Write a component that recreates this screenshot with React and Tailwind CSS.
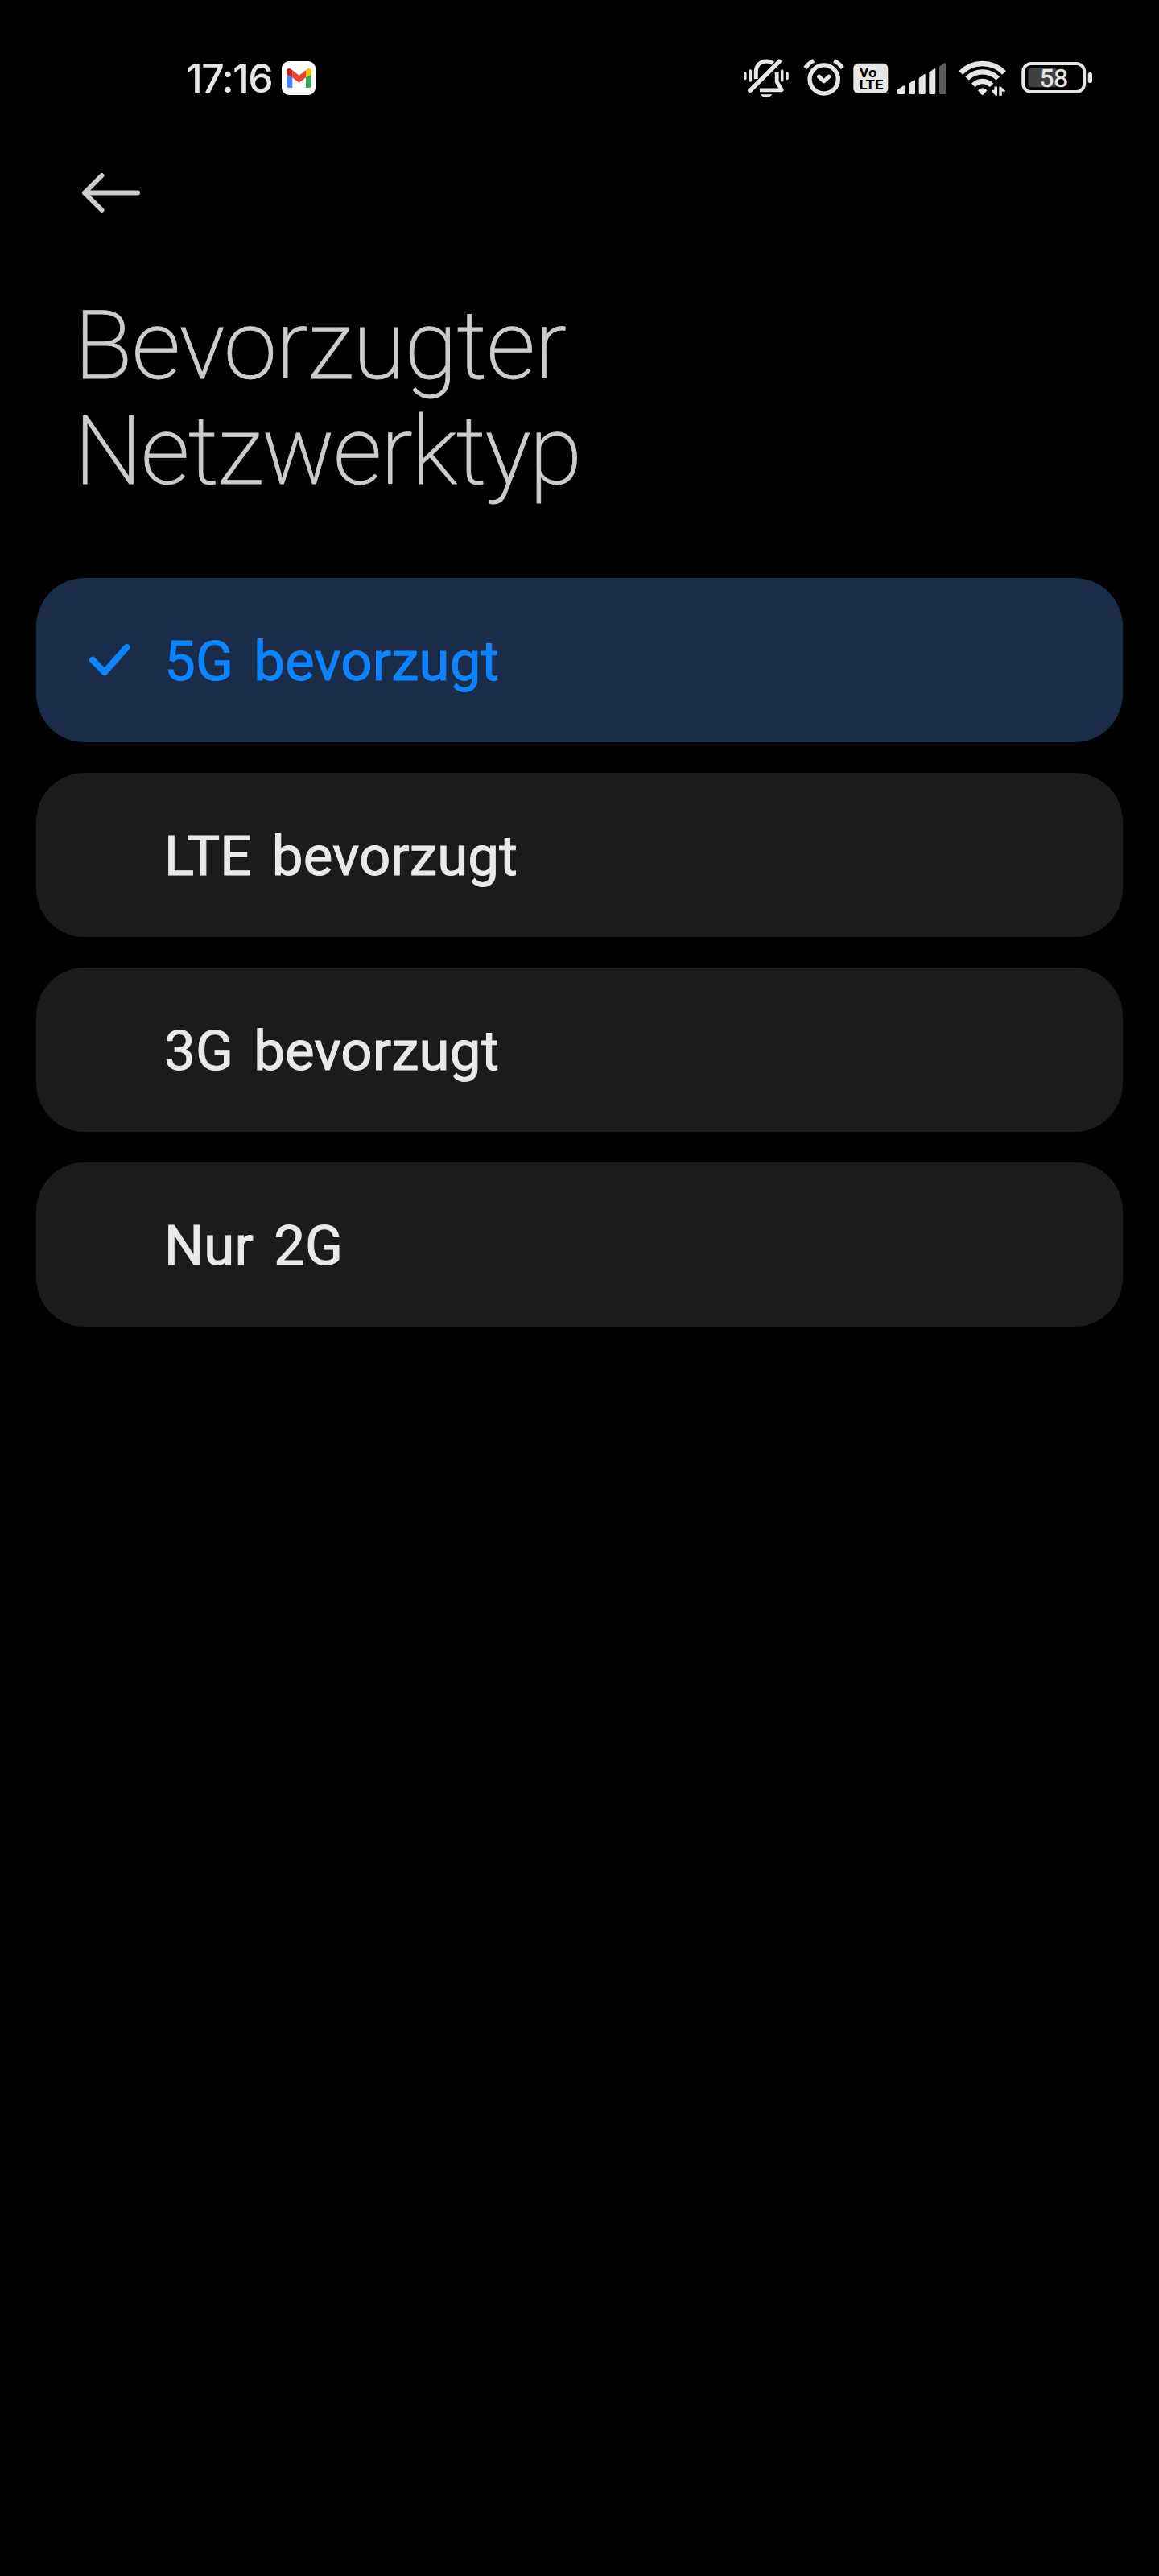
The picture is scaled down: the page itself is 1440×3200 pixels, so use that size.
const options = [
  { id: '5g', label: '5G bevorzugt' },
  { id: 'lte', label: 'LTE bevorzugt' },
  { id: '3g', label: '3G bevorzugt' },
  { id: '2g', label: 'Nur 2G' },
]

const GmailIcon = () => (
  <svg viewBox="0 0 42 42" className="h-[42px] w-[42px]">
    <rect width="42" height="42" rx="9" fill="#fff" />
    <path d="M6 16.5 13.3 20v13H8a2 2 0 0 1-2-2z" fill="#4285f4" />
    <path d="M36.7 16.5 30 20v13h4.7a2 2 0 0 0 2-2z" fill="#34a853" />
    <path d="M13.3 11.3 21.6 17.7 30 11.3V20.3L21.6 26.7 13.3 20.3z" fill="#ea4335" />
    <path d="M6 12.2c0-3 3.3-4.4 5.6-2.3l1.7 1.4v9L6 16.5z" fill="#c5221f" />
    <path d="M36.7 12.2c0-3-3.2-4.4-5.4-2.3L30 11.3v9l6.7-3.8z" fill="#fbbc04" />
  </svg>
)

const MutedBellIcon = () => (
  <svg viewBox="922 70 60 54" className="h-[54px] w-[60px]" fill="none" stroke="currentColor" strokeLinecap="round" strokeLinejoin="round">
    <path d="M925.8 91v6.5M932.3 88v12M971.7 88v12M978 91v6.5" strokeWidth="3.6" />
    <path d="M939.3 98V89.5C939.3 81 945 76 952 76C955.5 76 958.3 77 960.5 78.8" strokeWidth="5" strokeLinecap="butt" />
    <path d="M965.2 90V101.5L971.3 111.8H944" strokeWidth="4.8" strokeLinecap="butt" />
    <path d="M931.8 112.6 968.2 76.3" strokeWidth="5.4" />
    <path d="M945 117.3H959.3C957.5 120 955 121.3 952.2 121.3C949.3 121.3 946.8 120 945 117.3z" fill="currentColor" stroke="none" />
  </svg>
)

const AlarmIcon = () => (
  <svg viewBox="997 70 54 54" className="ml-[15px] h-[54px] w-[54px]" fill="none" stroke="currentColor" strokeWidth="5" strokeLinejoin="round">
    <circle cx="1023.7" cy="98.5" r="17.6" strokeWidth="5.4" />
    <path d="M1017.5 95.2 1023.7 101 1030 95.2" strokeLinecap="round" />
    <path d="M1000.5 84.5Q1004.5 78.5 1011 75.3M1036.3 75.3Q1042.8 78.5 1046.8 84.5" />
  </svg>
)

const VolteIcon = () => (
  <svg viewBox="1060 70 44 54" className="ml-[9px] h-[54px] w-[44px] font-['Roboto',sans-serif] text-[16px] font-bold">
    <rect x="1060.3" y="78.7" width="43" height="37.3" rx="6" fill="currentColor" />
    <text x="1067.5" y="95.5" textLength="22" lengthAdjust="spacingAndGlyphs" fill="#000">Vo</text>
    <text x="1067.5" y="111" textLength="30" lengthAdjust="spacingAndGlyphs" fill="#000">LTE</text>
  </svg>
)

const SignalIcon = () => (
  <svg viewBox="1115 70 60 54" className="ml-[11px] h-[54px] w-[60px]" fill="currentColor">
    <path d="M1115 111.5 1122.3 106.5Q1124 105.8 1124 107.5V115.5Q1124 117 1122.5 117H1116.5Q1115 117 1115 115.5z" />
    <path d="M1129 104 1135.5 99.5Q1137 98.8 1137 100.5V115.5Q1137 117 1135.5 117H1130.5Q1129 117 1129 115.5z" />
    <path d="M1141.7 97 1148.2 92.3Q1149.7 91.6 1149.7 93.5V115.5Q1149.7 117 1148.2 117H1143.2Q1141.7 117 1141.7 115.5z" />
    <path d="M1154.3 90 1160.8 85.3Q1162.3 84.6 1162.3 86.5V115.5Q1162.3 117 1160.8 117H1155.8Q1154.3 117 1154.3 115.5z" />
    <path d="M1167 83 1173.5 78.3Q1175 77.6 1175 79.5V115.5Q1175 117 1173.5 117H1168.5Q1167 117 1167 115.5z" fill="#5a5a5a" />
  </svg>
)

const WifiIcon = () => (
  <svg viewBox="1191 70 60 54" className="ml-[16px] h-[54px] w-[60px]" fill="none" stroke="currentColor">
    <path d="M1193.8 90.5A37.3 37.3 0 0 1 1247.6 90.5" strokeWidth="6.6" />
    <path d="M1201.6 97.5A26.5 26.5 0 0 1 1239.8 97.5" strokeWidth="6.4" />
    <path d="M1209.3 106A15.5 15.5 0 0 1 1232.1 106" strokeWidth="6.4" />
    <path d="M1215 112.3Q1220.7 106 1226.5 112.3L1222.2 117.2Q1220.7 118.6 1219.2 117.2z" fill="currentColor" stroke="none" />
    <path d="M1239 107.5V118.8H1236.8L1232 113.2V111.8H1235.4V107.5zM1241.3 118.8V107.5H1243.4L1248.8 112.3V113.8H1244.8V118.8z" fill="currentColor" stroke="none" />
  </svg>
)

const BatteryIcon = ({ level }) => (
  <svg viewBox="1269 70 88 54" className="ml-[18px] h-[54px] w-[88px] font-['Roboto',sans-serif] text-[31.5px]">
    <rect x="1277.5" y="85" width={(63 * level) / 100} height="23.3" rx="4" fill="#404040" />
    <rect x="1271.2" y="79" width="76" height="35" rx="10" fill="none" stroke="currentColor" strokeWidth="4" />
    <rect x="1351.7" y="90" width="5.3" height="13" rx="2.5" fill="currentColor" />
    <text x="1309.2" y="108.2" textAnchor="middle" fill="currentColor" stroke="currentColor" strokeWidth="0.5">{level}</text>
  </svg>
)

const BackIcon = () => (
  <svg viewBox="0 0 76 53" className="h-[53px] w-[76px]" fill="none" stroke="currentColor" strokeWidth="6" strokeLinecap="round" strokeLinejoin="round">
    <path d="M6 26.5H72M27.5 5 6 26.5 27.5 48" />
  </svg>
)

const CheckIcon = () => (
  <svg viewBox="0 0 52 42" className="h-[42px] w-[52px]" fill="none" stroke="currentColor" strokeWidth="8" strokeLinecap="round" strokeLinejoin="round">
    <path d="M4 20.8 19 36.2 46.5 5" />
  </svg>
)

const Option = ({ label, selected }) => (
  <li
    className={
      selected
        ? 'flex h-[204px] items-center rounded-[60px] bg-[#1a2c47] pl-[66px] text-[#0d84ff]'
        : 'flex h-[204px] items-center rounded-[60px] bg-[#1b1b1b] pl-[66px] text-[#e9e9e9]'
    }
  >
    <span className="w-[93px]">{selected && <CheckIcon />}</span>
    <span className="pt-[3px] text-[69px] font-normal tracking-[0.1px] [word-spacing:8px] [-webkit-text-stroke:1px]">{label}</span>
  </li>
)

export default function App() {
  return (
    <div className="h-[3200px] w-[1440px] overflow-hidden bg-black font-['Roboto',sans-serif]">
      <header className="flex h-[194px] items-center justify-between pr-[83px] pl-[231px] text-[#e6e6e6]">
        <div className="flex items-center gap-[12px]">
          <span className="w-[107px] font-['Inter',sans-serif] text-[50px] font-medium tracking-[-1.6px] whitespace-nowrap">17:16</span>
          <GmailIcon />
        </div>
        <div className="flex items-center">
          <MutedBellIcon />
          <AlarmIcon />
          <VolteIcon />
          <SignalIcon />
          <WifiIcon />
          <BatteryIcon level={58} />
        </div>
      </header>

      <main>
        <div className="pt-[19px] pl-[99px] text-[#ccc]">
          <BackIcon />
        </div>
        <h1 className="mt-[98px] ml-[92px] text-[119.5px] leading-[131px] font-extralight text-[#ccc] [-webkit-text-stroke:0.8px]">
          <span className="block tracking-[-1.1px]">Bevorzugter</span>
          <span className="block tracking-[-1.9px]">Netzwerktyp</span>
        </h1>
        <ul className="mt-[92px] flex flex-col gap-[38px] px-[45px]">
          {options.map((o) => (
            <Option key={o.id} label={o.label} selected={o.id === '5g'} />
          ))}
        </ul>
      </main>
    </div>
  )
}
